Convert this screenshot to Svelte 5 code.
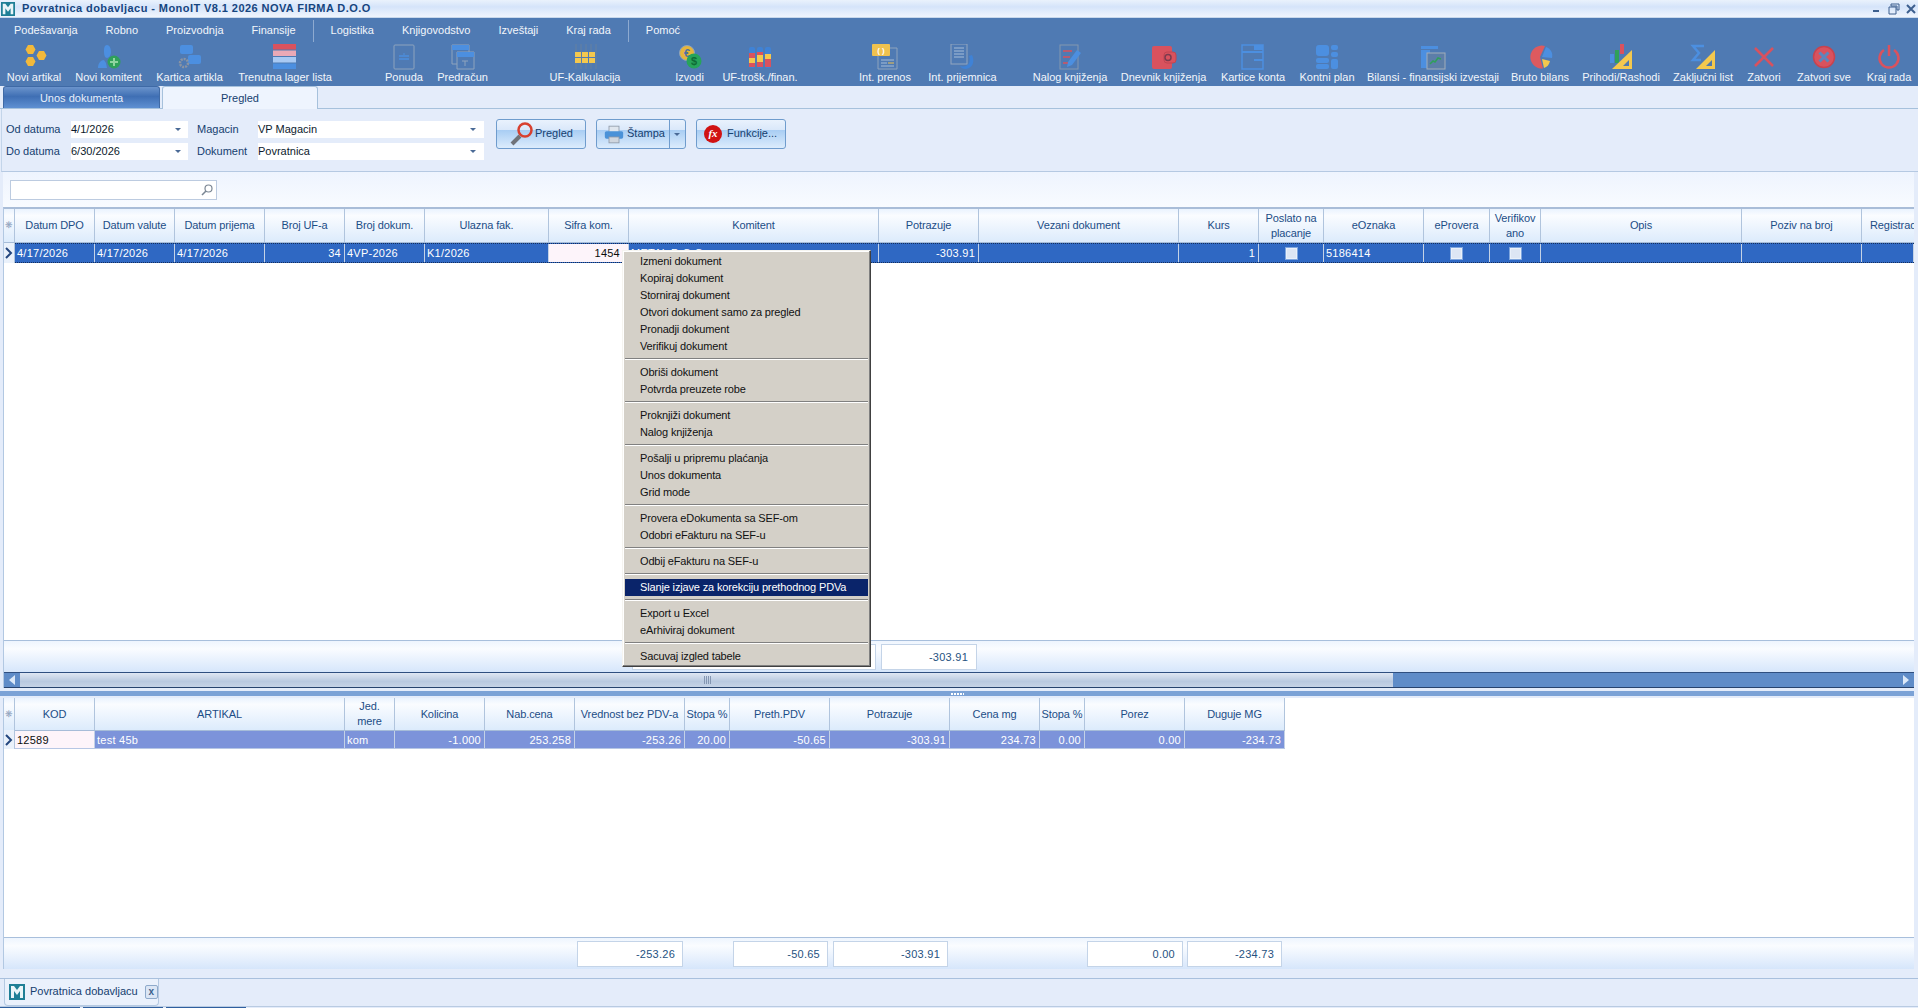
<script>
  // toolbar items: label, box width, left gap, svg body (viewBox 0 0 26 26)
  const tools = [
    { t: "Novi artikal", w: 52, m: 8, i: '<path fill="#f2b93b" d="M7 1l5 0 2.500 4.500-2.500 4.500-5 0-2.500-4.500zM18 7l5 0 2.500 4.500-2.500 4.500-5 0-2.500-4.500zM7 13l5 0 2.500 4.500-2.500 4.500-5 0-2.500-4.500z"/>' },
    { t: "Novi komitent", w: 65, m: 16, i: '<path fill="#4c8fe0" d="M11 1c3 0 4 4 4 7s-2 6-4 6-3-3-3-6 0-7 3-7zM2 24c0-5 3-8 6-8l2 3 1 5z"/><circle cx="18" cy="18" r="6.500" fill="#2fa05a"/><path stroke="#8fd49f" stroke-width="2" d="M18 14v8M14 18h8"/>' },
    { t: "Kartica artikla", w: 65, m: 16, i: '<rect x="3" y="1" width="13" height="9" rx="2" fill="#4c8fe0"/><rect x="11" y="11" width="13" height="9" rx="2" fill="#4c8fe0"/><circle cx="7" cy="19" r="4" fill="none" stroke="#8a94a3" stroke-width="2.500" stroke-dasharray="2 1"/>' },
    { t: "Trenutna lager lista", w: 92, m: 17, i: '<rect x="1" y="0" width="23" height="5.500" fill="#d9525e"/><rect x="1" y="6.500" width="23" height="5.500" fill="#eba9b6"/><rect x="1" y="13" width="23" height="5.500" fill="#a8c9f3"/><rect x="1" y="19.500" width="23" height="5.500" fill="#4c8fe0"/>' },
    { t: "Ponuda", w: 36, m: 55, i: '<rect x="3" y="1" width="20" height="24" rx="1" fill="none" stroke="#8ea3bd"/><path stroke="#4c8fe0" stroke-width="1.500" d="M8 12h10M8 15h10"/><path stroke="#4c8fe0" d="M13 9v2"/>' },
    { t: "Predračun", w: 49, m: 16, i: '<path fill="#4f7ab3" stroke="#8ea3bd" d="M2 1h17v19H2z"/><path fill="#4c8fe0" d="M2 1h17v5H2z"/><path fill="#4f7ab3" stroke="#8ea3bd" d="M7 8h17v17H7z"/><path fill="#4c8fe0" d="M7 8h17v5H7z"/><path stroke="#8ea3bd" d="M12 17h6M15 17v5"/>' },
    { t: "UF-Kalkulacija", w: 66, m: 65, i: '<path stroke="#66809f" d="M4 0v25M9 0v25M14 0v25M19 0v25M24 0v25"/><path fill="#f4c84e" d="M3 8h6v5H3zM10 8h6v5h-6zM17 8h6v5h-6zM3 14h6v5H3zM10 14h6v5h-6zM17 14h6v5h-6z"/>' },
    { t: "Izvodi", w: 29, m: 57, i: '<circle cx="10" cy="9" r="7.500" fill="#e6b53b" stroke="#8ea3bd"/><text x="10" y="13" font-size="11" font-family="Liberation Sans" font-weight="700" text-anchor="middle" fill="#4f6f9f">€</text><circle cx="17" cy="17" r="7.500" fill="#27a45a"/><text x="17" y="21" font-size="11" font-family="Liberation Sans" font-weight="700" text-anchor="middle" fill="#0f6b36">$</text>' },
    { t: "UF-trošk./finan.", w: 76, m: 18, i: '<rect x="2" y="3" width="6" height="21" rx="2" fill="#3f82d6"/><rect x="10" y="3" width="6" height="21" rx="2" fill="#3f82d6"/><rect x="18" y="3" width="6" height="21" rx="2" fill="#3f82d6"/><path fill="#d9525e" d="M2 9h6v14H2zM10 8h6v15h-6zM18 14h6v9h-6z"/><path fill="#f4c84e" d="M2 14h6v5H2zM10 11h6v7h-6zM18 10h6v5h-6z"/>' },
    { t: "Int. prenos", w: 54, m: 60, i: '<path fill="#4f7ab3" stroke="#8ea3bd" d="M6 4h19v21H6z"/><rect x="0" y="0" width="18" height="12" rx="1" fill="#f0c24f"/><text x="9" y="9" font-size="8" font-family="Liberation Sans" font-weight="700" text-anchor="middle" fill="#fff">( )</text><path stroke="#a7bdd8" d="M9 16h13M9 19h6M9 22h13"/><path stroke="#f0c24f" d="M16 19h6"/>' },
    { t: "Int. prijemnica", w: 69, m: 16, i: '<rect x="1" y="0" width="16" height="20" fill="#4f7ab3" stroke="#93a6bf"/><path stroke="#a7bdd8" d="M4 4h10M4 7h10M4 10h10M4 13h10"/><path fill="#3f82d6" d="M22 11c3 6 1 13-6 14-3 0-5-1-6-3 4 1 8 0 9-3 1-3 1-5 0-7z"/>' },
    { t: "Nalog knjiženja", w: 72, m: 37, i: '<rect x="3" y="1" width="18" height="24" fill="none" stroke="#8497b0"/><path stroke="#d9525e" stroke-width="1.500" d="M6 7h9M6 13h7M6 19h5"/><path fill="#4c8fe0" d="M20 6l4 3-9 12-5 2 1-5z"/>' },
    { t: "Dnevnik knjiženja", w: 83, m: 16, i: '<rect x="1" y="2" width="20" height="23" rx="2" fill="#d9525e"/><rect x="13" y="8" width="12" height="11" rx="3" fill="#d9525e" stroke="#c04551"/><circle cx="17" cy="13.500" r="3" fill="none" stroke="#7c3b4e" stroke-width="1.500"/>' },
    { t: "Kartice konta", w: 64, m: 16, i: '<rect x="2" y="1" width="21" height="24" fill="none" stroke="#4c8fe0" stroke-width="1.500"/><path fill="#4c8fe0" d="M2 7h21v2H2zM14 1h9v5h-9zM14 15h9v2h-9z"/>' },
    { t: "Kontni plan", w: 54, m: 15, i: '<rect x="2" y="1" width="13" height="11" rx="3" fill="#4c8fe0"/><rect x="17" y="1" width="7" height="5" rx="2" fill="#4c8fe0"/><rect x="17" y="8" width="7" height="5" rx="2" fill="#4c8fe0"/><rect x="2" y="14" width="13" height="5" rx="2" fill="#4c8fe0"/><rect x="2" y="20" width="13" height="5" rx="2" fill="#4c8fe0"/><rect x="17" y="15" width="7" height="10" rx="2" fill="#4c8fe0"/>' },
    { t: "Bilansi - finansijski izvestaji", w: 128, m: 15, i: '<path fill="#4c8fe0" d="M1 2h17v3H1zM1 6h9v18H1z"/><rect x="7" y="9" width="18" height="16" fill="#5d7ea8" stroke="#a2adba"/><path fill="none" stroke="#2fa05a" stroke-width="1.500" d="M10 20l3-3 2 1 3-4 3 1"/>' },
    { t: "Bruto bilans", w: 56, m: 15, i: '<path fill="#dd5a5f" d="M13 13L18 2A11.500 11.500 0 1 0 16 24.500z"/><path fill="#4c8fe0" d="M15 13l4-10c5 2 7 6 6 11z"/><path fill="#f4c84e" d="M15 15l8 2c-1 4-3 6-6 7z"/>' },
    { t: "Prihodi/Rashodi", w: 74, m: 16, i: '<path fill="#4c8fe0" d="M2 10h4v9H2z"/><path fill="#2fa05a" d="M7 6h4v13H7z"/><path fill="#d9525e" d="M12 0h4v10h-4z"/><path fill="#f4c84e" d="M24 6v19H4z"/><path fill="#5079ae" d="M21 16v6h-6z"/>' },
    { t: "Zaključni list", w: 58, m: 16, i: '<path fill="none" stroke="#4c8fe0" stroke-width="2.500" d="M14 2H3l6 7-6 7h8"/><path fill="#f4c84e" d="M25 6v19H6z"/><path fill="#5079ae" d="M22 16v6h-6z"/>' },
    { t: "Zatvori", w: 34, m: 15, i: '<path stroke="#d9525e" stroke-width="2.500" d="M4 4l18 18M22 4L4 22"/>' },
    { t: "Zatvori sve", w: 54, m: 16, i: '<circle cx="13" cy="13" r="10.500" fill="#d9525e" stroke="#c7434f" stroke-width="1.500"/><path stroke="#5c86bd" stroke-width="3" d="M8.500 8.500l9 9M17.500 8.500l-9 9"/>' },
    { t: "Kraj rada", w: 44, m: 16, i: '<path fill="none" stroke="#d9525e" stroke-width="2.500" d="M8 6a9.500 9.500 0 1 0 10 0M13 1v11"/>' }
  ];

  const menus = ["Podešavanja", "Robno", "Proizvodnja", "Finansije", "|", "Logistika", "Knjigovodstvo", "Izveštaji", "Kraj rada", "|", "Pomoć"];

  const topCols = [
    { h: "Datum DPO", w: 80, v: "4/17/2026" },
    { h: "Datum valute", w: 80, v: "4/17/2026" },
    { h: "Datum prijema", w: 90, v: "4/17/2026" },
    { h: "Broj UF-a", w: 80, v: "34", r: 1 },
    { h: "Broj dokum.", w: 80, v: "4VP-2026" },
    { h: "Ulazna fak.", w: 124, v: "K1/2026" },
    { h: "Sifra kom.", w: 80, v: "1454", r: 1, focus: 1 },
    { h: "Komitent", w: 250, v: "METAL D.O.O" },
    { h: "Potrazuje", w: 100, v: "-303.91", r: 1 },
    { h: "Vezani dokument", w: 200, v: "" },
    { h: "Kurs", w: 80, v: "1", r: 1 },
    { h: "Poslato na placanje", w: 65, check: 1 },
    { h: "eOznaka", w: 100, v: "5186414" },
    { h: "eProvera", w: 66, check: 1 },
    { h: "Verifikov ano", w: 51, check: 1 },
    { h: "Opis", w: 201, v: "" },
    { h: "Poziv na broj", w: 120, v: "" },
    { h: "Registrad", w: 52, v: "", clip: 1 }
  ];

  const botCols = [
    { h: "KOD", w: 80, v: "12589", focus: 1 },
    { h: "ARTIKAL", w: 250, v: "test 45b" },
    { h: "Jed. mere", w: 50, v: "kom" },
    { h: "Kolicina", w: 90, v: "-1.000", r: 1 },
    { h: "Nab.cena", w: 90, v: "253.258", r: 1 },
    { h: "Vrednost bez PDV-a", w: 110, v: "-253.26", r: 1 },
    { h: "Stopa %", w: 45, v: "20.00", r: 1 },
    { h: "Preth.PDV", w: 100, v: "-50.65", r: 1 },
    { h: "Potrazuje", w: 120, v: "-303.91", r: 1 },
    { h: "Cena mg", w: 90, v: "234.73", r: 1 },
    { h: "Stopa %", w: 45, v: "0.00", r: 1 },
    { h: "Porez", w: 100, v: "0.00", r: 1 },
    { h: "Duguje MG", w: 100, v: "-234.73", r: 1 }
  ];

  const botTotals = [
    { m: 573, w: 106, v: "-253.26" },
    { m: 50, w: 95, v: "-50.65" },
    { m: 5, w: 115, v: "-303.91" },
    { m: 139, w: 96, v: "0.00" },
    { m: 4, w: 95, v: "-234.73" }
  ];

  // "-" is a separator
  const ctxMenu = [
    "Izmeni dokument", "Kopiraj dokument", "Storniraj dokument", "Otvori dokument samo za pregled", "Pronadji dokument", "Verifikuj dokument", "-",
    "Obriši dokument", "Potvrda preuzete robe", "-",
    "Proknjiži dokument", "Nalog knjiženja", "-",
    "Pošalji u pripremu plaćanja", "Unos dokumenta", "Grid mode", "-",
    "Provera eDokumenta sa SEF-om", "Odobri eFakturu na SEF-u", "-",
    "Odbij eFakturu na SEF-u", "-",
    "Slanje izjave za korekciju prethodnog PDVa", "-",
    "Export u Excel", "eArhiviraj dokument", "-",
    "Sacuvaj izgled tabele"
  ];
</script>

{#snippet logo(size)}
  <svg width={size} height={size} viewBox="0 0 16 16">
    <rect width="16" height="16" fill="#1f7f96" />
    <path fill="#eaf5f8" d="M2 14V2h3l3 4 3-4h3v12h-3V7L8 11 5 7v7z" />
  </svg>
{/snippet}

{#snippet grid(cols, second)}
  <div class="gridhead" class:second>
    <div class="marker">❋</div>
    {#each cols as c}
      <div class="hcell" class:clip={c.clip} style="width:{c.w}px"><span>{c.h}</span></div>
    {/each}
  </div>
  <div class="gridrow" class:second>
    <div class="marker arrow"><svg width="8" height="12" viewBox="0 0 8 12"><path d="M1 1l5 5-5 5" fill="none" stroke="#24467e" stroke-width="2" /></svg></div>
    {#each cols as c}
      <div class="cell" class:right={c.r} class:focus={c.focus} style="width:{c.w}px">
        {#if c.check}<span class="check"></span>{:else}{c.v}{/if}
      </div>
    {/each}
  </div>
{/snippet}

<div class="app">
  <header class="title">
    {@render logo(14)}
    <span>Povratnica dobavljacu - MonoIT V8.1 2026 NOVA FIRMA D.O.O</span>
    <div class="winbtns">
      <svg width="12" height="12" viewBox="0 0 12 12"><rect x="2" y="7" width="6" height="2" fill="#3d5f8e" /></svg>
      <svg width="12" height="12" viewBox="0 0 12 12"><path d="M3 1h8v6H9V3H3z M1 4h7v7H1z" fill="none" stroke="#3d5f8e" /></svg>
      <svg width="12" height="12" viewBox="0 0 12 12"><path d="M2 2l8 8M10 2l-8 8" stroke="#3d5f8e" stroke-width="2" /></svg>
    </div>
  </header>

  <section class="ribbon">
    <nav class="menu">
      {#each menus as m}
        {#if m === "|"}<i class="menusep"></i>{:else}<span>{m}</span>{/if}
      {/each}
    </nav>
    <div class="tools">
      {#each tools as tool}
        <div class="tool" style="width:{tool.w}px;margin-left:{tool.m}px">
          <svg width="26" height="26" viewBox="0 0 26 26">{@html tool.i}</svg>
          <span>{tool.t}</span>
        </div>
      {/each}
    </div>
  </section>

  <div class="tabs">
    <div class="tab off">Unos dokumenta</div>
    <div class="tab on">Pregled</div>
  </div>

  <section class="filters">
    <div class="fgrid">
      <label for="od">Od datuma</label>
      <div class="combo date" id="od">4/1/2026<b></b></div>
      <label for="mag">Magacin</label>
      <div class="combo wide" id="mag">VP Magacin<b></b></div>
      <label for="do">Do datuma</label>
      <div class="combo date" id="do">6/30/2026<b></b></div>
      <label for="dok">Dokument</label>
      <div class="combo wide" id="dok">Povratnica<b></b></div>
    </div>
    <button class="btn">
      <svg width="26" height="26" viewBox="0 0 26 26"><path d="M11 15l-8 8" stroke="#6f7379" stroke-width="4" /><circle cx="16" cy="9" r="6.500" fill="none" stroke="#d8402f" stroke-width="2.500" /></svg>
      Pregled
    </button>
    <div class="btn split">
      <span class="main">
        <svg width="20" height="19" viewBox="0 0 24 22"><rect x="6" y="1" width="12" height="8" fill="#dfe6ee" stroke="#8f9aa8" /><rect x="1" y="7" width="22" height="9" rx="2" fill="#4a92d8" /><rect x="6" y="14" width="12" height="7" fill="#cfd6de" stroke="#8f9aa8" /></svg>
        Štampa
      </span>
      <span class="drop"><b></b></span>
    </div>
    <button class="btn fx">
      <span class="fxicon">fx</span>
      Funkcije...
    </button>
  </section>

  <section class="searchbar">
    <div class="search">
      <svg width="14" height="14" viewBox="0 0 14 14"><circle cx="8.500" cy="5.500" r="3.500" fill="none" stroke="#7b8794" stroke-width="1.200" /><path d="M6 8l-4 4" stroke="#7b8794" stroke-width="1.600" /></svg>
    </div>
  </section>

  <section class="top">
    {@render grid(topCols, false)}
    <div class="blank"></div>
    <div class="totals">
      <div class="box under">&nbsp;</div>
      <div class="box sum">-303.91</div>
    </div>
    <div class="scroll">
      <span class="sbtn"><svg width="7" height="10" viewBox="0 0 7 10"><path d="M6 0v10L0 5z" fill="#dbe8f8" /></svg></span>
      <span class="thumb"><i></i></span>
      <span class="sbtn end"><svg width="7" height="10" viewBox="0 0 7 10"><path d="M0 0v10l6-5z" fill="#dbe8f8" /></svg></span>
    </div>
  </section>

  <div class="splitter"><i></i></div>

  <section class="bottom">
    {@render grid(botCols, true)}
    <div class="blank"></div>
    <div class="totals low">
      {#each botTotals as b}
        <div class="box" style="width:{b.w}px;margin-left:{b.m}px">{b.v}</div>
      {/each}
    </div>
  </section>

  <div class="doctabs">
    <div class="doctab">
      {@render logo(16)}
      <span>Povratnica dobavljacu</span>
      <i class="docx">x</i>
    </div>
  </div>
  <footer class="status"><i></i><i></i><i></i></footer>

  <ul class="ctx">
    {#each ctxMenu as item}
      {#if item === "-"}
        <li class="sep"></li>
      {:else}
        <li class:hot={item.startsWith("Slanje")}>{item}</li>
      {/if}
    {/each}
  </ul>
</div>

<style>
  :global(body) { margin: 0; overflow: hidden; }

  .app {
    position: relative; width: 1918px; height: 1008px; display: flex; flex-direction: column; overflow: hidden;
    background: #e4ecfa; color: #15406f; font: 11px/1.2 "Liberation Sans", Arial, sans-serif;
  }
  svg { display: block; flex: none; }

  .title {
    height: 18px; flex: none; display: flex; align-items: center; gap: 7px; padding-left: 1px; box-sizing: border-box;
    background: linear-gradient(#eaf2fc, #d5e4fa 40%, #f0f5fd); border-bottom: 1px solid #c8d8ec;
    font-weight: 700; letter-spacing: .43px; color: #16457f;
  }
  .winbtns { margin-left: auto; display: flex; gap: 5px; padding-right: 1px; }

  .ribbon { height: 68px; flex: none; background: #4f7ab3; color: #f2f6fb; }
  .menu { height: 24px; display: flex; align-items: center; padding-top: 2px; box-sizing: border-box; }
  .menu span { padding: 0 14px; }
  .menusep { width: 1px; height: 22px; margin: 0 3px; background: #8eaad0; }
  .tools { display: flex; height: 44px; }
  .tool { flex: none; display: flex; flex-direction: column; align-items: center; white-space: nowrap; padding-top: 2px; box-sizing: border-box; }
  .tool span { margin-top: 1px; }

  .tabs { height: 23px; flex: none; display: flex; align-items: flex-end; padding-left: 3px; gap: 2px; border-bottom: 1px solid #a6c1dc; box-sizing: border-box; }
  .tab { height: 22px; box-sizing: border-box; text-align: center; line-height: 23px; border-radius: 3px 3px 0 0; }
  .tab.off { width: 157px; color: #e8f0fb; background: linear-gradient(#6b94cc, #3f6fb4 45%, #5f90d2); border: 1px solid #3f6aa6; border-bottom: 0; }
  .tab.on { width: 156px; height: 23px; margin-bottom: -1px; background: #eef4fe; border: 1px solid #a6c1dc; border-bottom: 0; }

  .filters { height: 63px; flex: none; display: flex; align-items: flex-start; margin-left: 1px; padding: 10px 0 0 4px; box-sizing: border-box; border-left: 1px solid #c3d5ea; border-bottom: 1px solid #b5c9e2; }
  .fgrid { display: grid; grid-template-columns: 65px 117px 70px 226px; row-gap: 5px; align-items: center; width: 478px; margin-top: 2px; }
  .fgrid label { line-height: 17px; }
  .combo { position: relative; height: 17px; background: #fff; color: #0c1a2c; line-height: 17px; }
  .combo b, .drop b { position: absolute; right: 7px; top: 7px; border: 3px solid transparent; border-top: 3px solid #4a6a96; border-bottom: 0; }
  .combo.wide b { right: 8px; }
  .fgrid label:nth-of-type(even) { padding-left: 9px; }
  .btn {
    height: 30px; box-sizing: border-box; display: flex; align-items: center; padding: 0 0 0 12px; margin: 0;
    border: 1px solid #6f9ccd; border-radius: 3px; color: #15406f; font: inherit;
    background: linear-gradient(#e9f2fd, #dae8fa 35%, #a8cdf3 36%, #dcecfc);
  }
  .btn:first-of-type { width: 90px; margin-left: 12px; }
  .split { width: 90px; margin-left: 10px; padding: 0; display: flex; }
  .split .main { display: flex; align-items: center; gap: 3px; width: 73px; padding-left: 7px; box-sizing: border-box; border-right: 1px solid #6f9ccd; height: 100%; }
  .drop { position: relative; flex: 1; height: 100%; }
  .drop b { right: 5px; top: 13px; }
  .fx { width: 90px; margin-left: 10px; padding-left: 7px; gap: 5px; }
  .fxicon { width: 18px; height: 18px; border-radius: 50%; background: #d01212; color: #fff; text-align: center; font: italic 700 11px/17px "Liberation Serif", serif; }

  .searchbar { height: 35px; flex: none; display: flex; align-items: center; margin-left: 3px; margin-right: 4px; background: linear-gradient(#eef4fe, #f8fbff); }
  .search { width: 207px; height: 20px; margin-left: 7px; background: #fff; border: 1px solid #bccbe0; display: flex; justify-content: flex-end; align-items: center; padding-right: 2px; box-sizing: border-box; }

  .top, .bottom { margin-left: 3px; margin-right: 4px; display: flex; flex-direction: column; flex: none; background: #fff; border-left: 1px solid #b2c8e2; box-sizing: border-box; }
  .top { height: 481px; border-top: 2px solid #a9bdd8; }
  .bottom { height: 271px; margin-top: 2px; }

  .gridhead { height: 34px; flex: none; display: flex; overflow: hidden; background: linear-gradient(#eaf3fe, #fafcff 20%, #dcebfc); border-bottom: 1px solid #a6bcd8; box-sizing: border-box; }
  .gridhead.second { width: 1281px; height: 33px; }
  .marker { width: 11px; flex: none; box-sizing: border-box; display: flex; align-items: center; justify-content: center; font-size: 9px; color: #8fa2bd; border-right: 1px solid #b0c4dd; }
  .hcell { flex: none; box-sizing: border-box; display: flex; align-items: center; justify-content: center; text-align: center; line-height: 15px; padding: 0 1px; border-right: 1px solid #b0c4dd; letter-spacing: -.1px; color: #1c4d86; overflow: hidden; }
  .hcell.clip { justify-content: flex-start; padding-left: 8px; white-space: nowrap; border-right: 0; }

  .gridrow { height: 20px; flex: none; display: flex; background: #2f68c3; color: #fff; border-top: 1px dotted #152f5c; border-bottom: 1px dotted #152f5c; box-sizing: border-box; letter-spacing: .25px; }
  .gridrow.second { width: 1281px; height: 18px; background: #7c93da; border: 0; border-bottom: 1px solid #b6c6e4; }
  .gridrow .marker.arrow { background: #eaf1fb; margin: -1px 0; }
  .cell { flex: none; box-sizing: border-box; line-height: 18px; padding: 0 2px; border-right: 1px solid #c4d2e6; white-space: nowrap; overflow: hidden; display: flex; align-items: center; }
  .cell.right { justify-content: flex-end; padding-right: 3px; }
  .cell.focus { background: #fdf4fa; color: #0c0c0c; }
  .cell.focus.right { padding-right: 8px; }
  .check { width: 9px; height: 9px; margin: 0 auto; background: #dde6f4; border: 1px solid #e9f0fa; box-shadow: 0 0 0 1px #7fa6de; }

  .blank { flex: 1; background: #fff; }

  .totals { height: 32px; flex: none; box-sizing: border-box; display: flex; align-items: center; background: linear-gradient(#eef5fe, #fafcff 25%, #d6e6fb); border-top: 1px solid #a8bfdc; }
  .box { height: 26px; box-sizing: border-box; background: #fff; border: 1px solid #c4d4e8; line-height: 25px; text-align: right; padding-right: 7px; color: #26527f; letter-spacing: .25px; flex: none; }
  .box.under { width: 244px; margin-left: 628px; }
  .box.sum { width: 96px; margin-left: 5px; padding-right: 8px; }

  .scroll { height: 16px; flex: none; display: flex; background: #5f8cc8; border-top: 1px solid #2f4f80; border-bottom: 1px solid #27436e; box-sizing: border-box; }
  .sbtn { width: 16px; background: #5f8cc8; display: flex; align-items: center; justify-content: center; flex: none; }
  .sbtn.end { margin-left: auto; }
  .thumb { width: 1373px; position: relative; background: linear-gradient(#dfe7f3, #b9c9e0 60%, #c6d3e6); }
  .thumb i { position: absolute; left: 684px; top: 3px; width: 7px; height: 8px; background: repeating-linear-gradient(90deg, #8496b2 0 1px, transparent 1px 2px); }

  .splitter { height: 5px; flex: none; margin-top: 3px; margin-right: 4px; background: #7ba2d6; display: flex; justify-content: center; align-items: center; }
  .splitter i { width: 13px; height: 2px; background: repeating-linear-gradient(90deg, #fff 0 2px, transparent 2px 3px); }

  .doctabs { height: 28px; flex: none; margin-top: 9px; display: flex; align-items: flex-start; padding-left: 4px; border-top: 1px solid #a9c0dd; box-sizing: border-box; background: #e4ecfa; }
  .doctab { width: 155px; height: 27px; box-sizing: border-box; display: flex; align-items: center; gap: 5px; padding-left: 4px; border: 1px solid #b4c9e2; border-top: 0; border-radius: 0 0 4px 4px; background: #eaf1fc; white-space: nowrap; }
  .docx { width: 14px; height: 14px; box-sizing: border-box; border: 1px solid #8eaacb; border-radius: 2px; font: 700 10px/11px "Liberation Sans", sans-serif; text-align: center; color: #3a5f8c; background: #dbe6f5; margin-left: 2px; }

  .status { flex: 1; display: flex; gap: 3px; align-items: flex-end; border-top: 1px solid #b9cbe2; }
  .status i { width: 80px; height: 2px; background: #2f5f9f; }

  .ctx {
    position: absolute; left: 622px; top: 250px; width: 249px; height: 417px; box-sizing: border-box; margin: 0; padding: 2px 2px 0; list-style: none;
    background: #d4d0c8; color: #111; letter-spacing: -.15px;
    border: 1px solid; border-color: #f5f4f0 #404040 #404040 #f5f4f0; box-shadow: inset -1px -1px 0 #808080, inset 1px 1px 0 #fff;
  }
  .ctx li { height: 17px; line-height: 17px; padding-left: 15px; white-space: nowrap; }
  .ctx li.hot { background: #0a246a; color: #fff; }
  .ctx li.sep { height: 9px; position: relative; padding: 0; }
  .ctx li.sep::after { content: ""; position: absolute; left: 0; right: 0; top: 3px; height: 2px; background: linear-gradient(#808080 50%, #fff 50%); }
</style>
